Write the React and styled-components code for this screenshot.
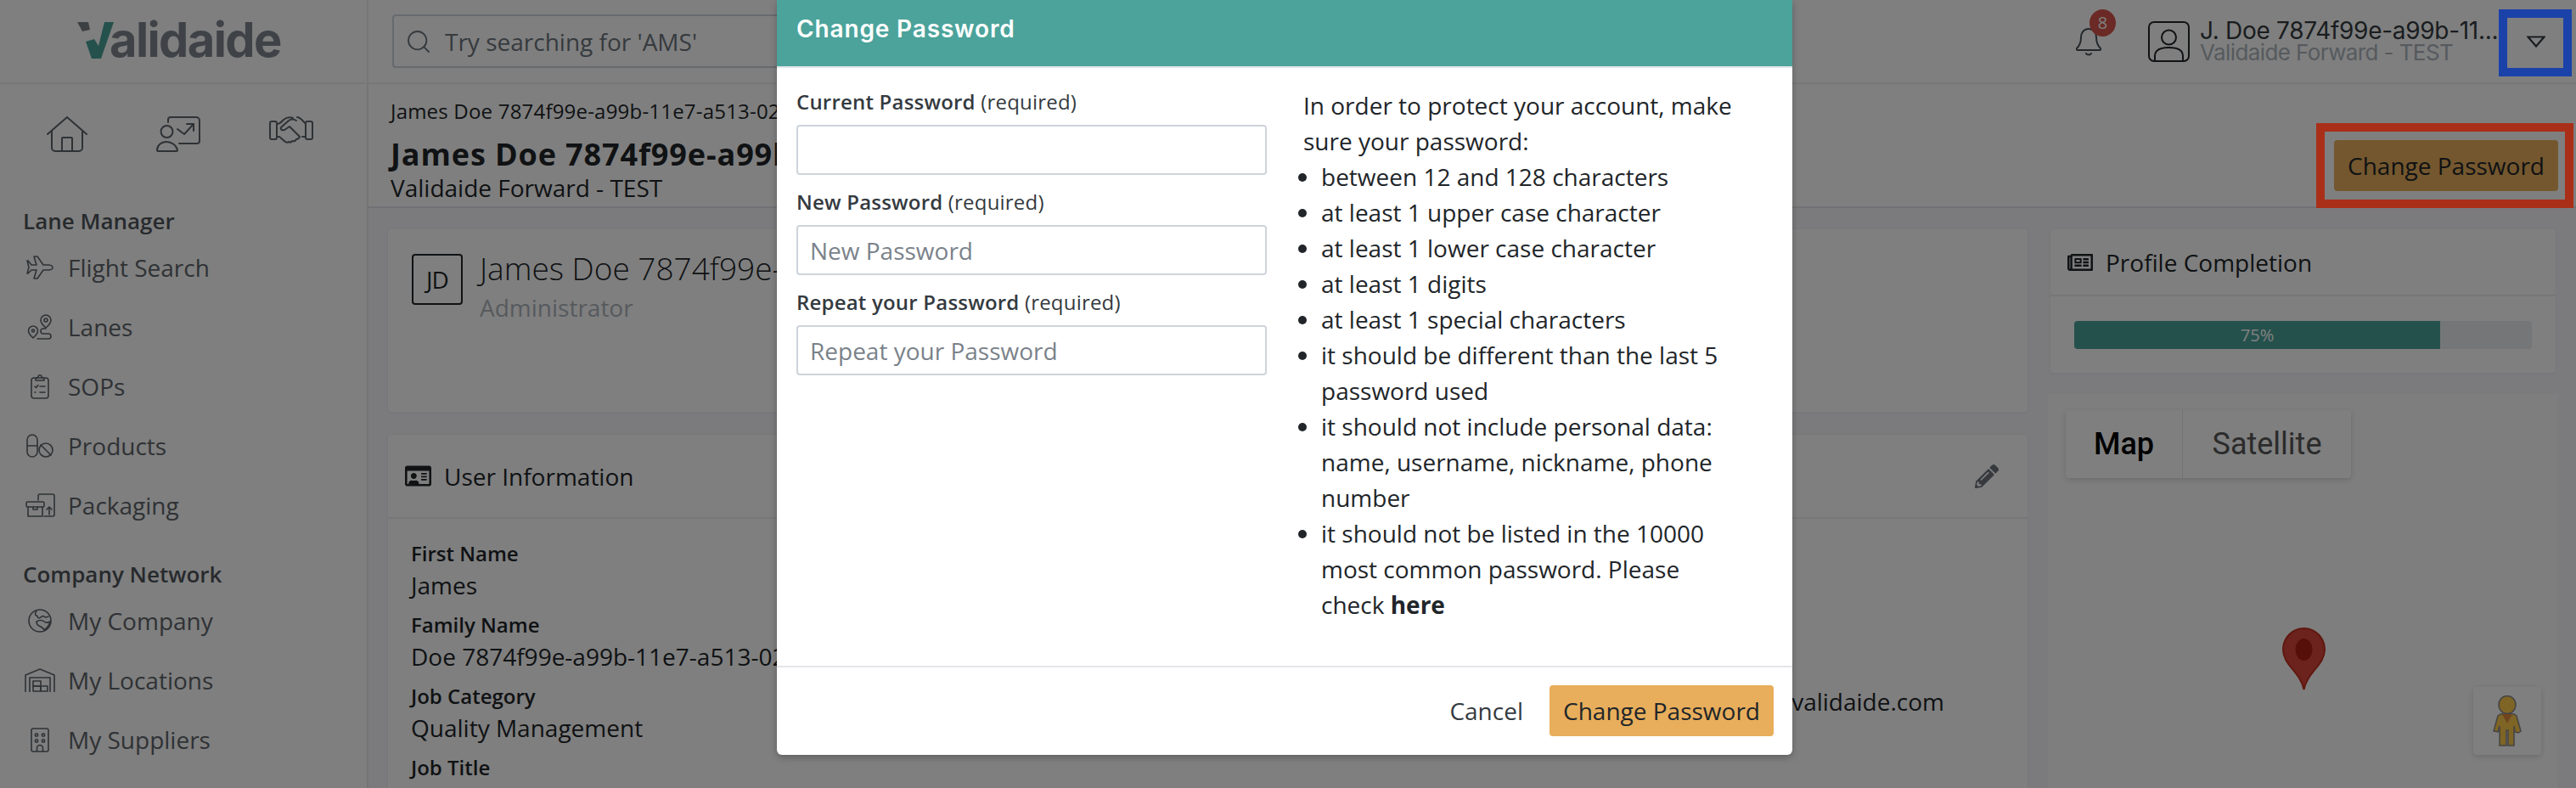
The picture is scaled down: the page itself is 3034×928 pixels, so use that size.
import React from 'react'
import styled, { createGlobalStyle } from 'styled-components'
import { Search } from 'lucide-react'
import { FaRegIdCard, FaRegNewspaper, FaPencilAlt } from 'react-icons/fa'

const lineIcon = { fill: 'none', stroke: 'currentColor', strokeWidth: 1.6, strokeLinecap: 'round', strokeLinejoin: 'round' }

const HomeIcon = () => (
  <svg width="48" height="42" viewBox="0 0 48 42" {...lineIcon} strokeWidth="2">
    <path d="M1 21 24 1l23 20" />
    <path d="M6 17v20a4 4 0 0 0 4 4h28a4 4 0 0 0 4-4V17" />
    <path d="M18 41V26a1 1 0 0 1 1-1h10a1 1 0 0 1 1 1v15" />
  </svg>
)

const CoachIcon = () => (
  <svg width="52" height="42" viewBox="0 0 52 42" {...lineIcon} strokeWidth="2">
    <path d="M14 7V4a3 3 0 0 1 3-3h30a4 4 0 0 1 4 4v24a3 3 0 0 1-3 3H27" />
    <circle cx="12.5" cy="18" r="7" />
    <path d="M1 40c0-6 5-10 11-10s12 4 13 10a1 1 0 0 1-1 1H2a1 1 0 0 1-1-1z" />
    <path d="M25 15l8 6 11-12" />
    <path d="M36 9h8v8" />
  </svg>
)

const HandshakeIcon = () => (
  <svg width="52" height="32" viewBox="0 0 52 32" {...lineIcon} strokeWidth="2">
    <rect x="1" y="6" width="8" height="21" rx="2" />
    <rect x="43" y="6" width="8" height="21" rx="2" />
    <path d="M9 9c4 0 6-3 8-5 4-3 8-3 11-2" />
    <path d="M33 1c3 0 6 3 10 8" />
    <path d="M9 24h3l7 6c2 1 3 1 4 0 2 1 3 1 4-1 3 1 4 0 5-2 2 0 3-1 4-3l-12-12-6 4c-3 1-5-1-4-3l9-8c3-2 6-2 9 0" />
    <path d="M39 24h4" />
  </svg>
)

const PlaneIcon = () => (
  <svg width="32" height="28" viewBox="0 0 32 28" {...lineIcon}>
    <path d="M31 14c0-2-3-3-5-3h-6L13 1H9l3 10H6L2 6H1l2 8-2 7h1l4-4h6L9 27h4l7-10h6c2 0 5-1 5-3z" />
  </svg>
)

const LanesIcon = () => (
  <svg width="30" height="30" viewBox="0 0 30 30" {...lineIcon}>
    <path d="M22 1a6 6 0 0 1 6 6c0 4-6 9-6 9s-6-5-6-9a6 6 0 0 1 6-6z" />
    <circle cx="22" cy="7" r="2" />
    <path d="M7 14a5.500 5.500 0 0 1 5.500 5.500C12.500 23 7 28 7 28s-5.500-5-5.500-8.500A5.500 5.500 0 0 1 7 14z" />
    <circle cx="7" cy="19.500" r="1.500" />
    <path d="M22 17h-3a3 3 0 0 0 0 6h6a3 3 0 0 1 0 6H12" />
  </svg>
)

const ClipboardIcon = () => (
  <svg width="22" height="30" viewBox="0 0 22 30" {...lineIcon}>
    <rect x="1" y="5" width="20" height="24" rx="3" />
    <path d="M6 8V6l3-2c0-3 4-3 4 0l3 2v2z" />
    <path d="M5 15l1.500 1.500L9 13.500" />
    <path d="M11 15h6M5 22h1M11 22h6" />
  </svg>
)

const PillsIcon = () => (
  <svg width="32" height="28" viewBox="0 0 32 28" {...lineIcon}>
    <rect x="1" y="1" width="12" height="26" rx="6" />
    <path d="M1 14h12" />
    <circle cx="23" cy="19" r="8" />
    <path d="M17 13l12 12" />
  </svg>
)

const PackagingIcon = () => (
  <svg width="35" height="28" viewBox="0 0 35 28" {...lineIcon}>
    <path d="M15 8V3a2 2 0 0 1 2-2h15a2 2 0 0 1 2 2v22a2 2 0 0 1-2 2H22" />
    <rect x="1" y="10" width="21" height="6" rx="1.500" />
    <path d="M3 16v11h17V16" />
    <path d="M9 16v3h5v-3" />
    <path d="M28 25V16M25 19l3-3 3 3" />
  </svg>
)

const GlobeIcon = () => (
  <svg width="28" height="28" viewBox="0 0 28 28" {...lineIcon}>
    <circle cx="14" cy="14" r="13" />
    <path d="M10 3c-2 2-2 4 0 5s1 3 3 3 4-4 6-2 3 1 5 0" />
    <path d="M10 15c3-2 7-2 9 0s5 1 7 0c-1 4-4 8-7 10-1-3-4-4-6-5s-3-3-3-5z" />
  </svg>
)

const WarehouseIcon = () => (
  <svg width="36" height="28" viewBox="0 0 36 28" {...lineIcon}>
    <path d="M1 28V8l17-7 17 7v20" />
    <path d="M6 28V11h24v17" />
    <rect x="10" y="15" width="9" height="6" />
    <rect x="10" y="21" width="9" height="6" />
    <rect x="19" y="21" width="8" height="6" />
  </svg>
)

const BuildingIcon = () => (
  <svg width="22" height="29" viewBox="0 0 22 29" {...lineIcon}>
    <rect x="1" y="1" width="20" height="27" rx="2" />
    <rect x="5.500" y="7" width="3" height="3" rx=".8" />
    <rect x="13.500" y="7" width="3" height="3" rx=".8" />
    <rect x="5.500" y="14" width="3" height="3" rx=".8" />
    <rect x="13.500" y="14" width="3" height="3" rx=".8" />
    <path d="M7.500 28v-4a3.500 3.500 0 0 1 7 0v4" />
  </svg>
)

const BellIcon = () => (
  <svg width="30" height="34" viewBox="0 0 30 34" {...lineIcon} strokeWidth="2">
    <path d="M15 2c-6 0-9 5-9 10 0 6-2 10-5 13-1 1 0 2 1 2h26c1 0 2-1 1-2-3-3-5-7-5-13 0-5-3-10-9-10z" />
    <path d="M12 31c1 2 5 2 6 0" />
  </svg>
)

const AvatarIcon = () => (
  <svg width="49" height="48" viewBox="0 0 49 48" {...lineIcon} strokeWidth="2">
    <rect x="1" y="1" width="47" height="46" rx="6" />
    <circle cx="24.500" cy="19" r="8.500" />
    <path d="M8 47v-6c0-7 7-10 16.500-10S41 34 41 41v6" />
  </svg>
)

const CaretIcon = () => (
  <svg width="22" height="14" viewBox="0 0 22 14" {...lineIcon} strokeWidth="2.200" strokeLinejoin="miter">
    <path d="M1.500 1.500h19L11 12.500z" />
  </svg>
)

const LogoMark = () => (
  <svg width="56" height="44" viewBox="0 0 56 44" style={{ marginBottom: -1 }}>
    <path d="M0 0h13l2 9-9 2z" fill="#7b8087" />
    <path d="M10 23l10-3 5 8L32 0h11L28 43H17z" fill="#4ba39b" />
  </svg>
)

const PinIcon = () => (
  <svg width="51" height="74" viewBox="0 0 51 74">
    <path d="M25.500 1C12 1 1 12 1 26c0 18 20 26 24.500 47C30 52 50 44 50 26 50 12 39 1 25.500 1z" fill="#d9453a" stroke="#c0301f" strokeWidth="2" />
    <ellipse cx="25.500" cy="26" rx="10" ry="13" fill="#ae2013" />
  </svg>
)

const PegmanIcon = () => (
  <svg width="34" height="60" viewBox="0 0 34 60">
    <path d="M9 22h16l3 2 5 18-3 2-4-1-1-7v23H18V41h-2v18H8V36l-2 7-5-1 5-18z" fill="#fdc94a" stroke="#888" strokeWidth="1.500" />
    <ellipse cx="17" cy="11" rx="10" ry="10.500" fill="#fdc94a" stroke="#888" strokeWidth="1.500" />
    <path d="M11 22h12l-6 11z" fill="#e08a3c" />
  </svg>
)

const laneItems = [
  ['Flight Search', PlaneIcon],
  ['Lanes', LanesIcon],
  ['SOPs', ClipboardIcon],
  ['Products', PillsIcon],
  ['Packaging', PackagingIcon],
]

const companyItems = [
  ['My Company', GlobeIcon],
  ['My Locations', WarehouseIcon],
  ['My Suppliers', BuildingIcon],
]

const userFields = [
  ['First Name', 'James'],
  ['Family Name', 'Doe 7874f99e-a99b-11e7-a513-0242ac110002'],
  ['Job Category', 'Quality Management'],
  ['Job Title', ''],
]

const App = () => {
  return (
    <Page>
      <GlobalStyle />
      <TopBar>
        <LogoCell>
          <LogoMark />
          <LogoText>alidaide</LogoText>
        </LogoCell>
        <SearchBox>
          <Search size={32} strokeWidth={1.4} />
          <span>Try searching for 'AMS'</span>
        </SearchBox>
        <UserArea>
          <BellWrap>
            <BellIcon />
            <Badge>8</Badge>
          </BellWrap>
          <AvatarIcon />
          <UserNames>
            <UserName>J. Doe 7874f99e-a99b-11...</UserName>
            <UserCompany>Validaide Forward - TEST</UserCompany>
          </UserNames>
          <CaretSlot><CaretIcon /></CaretSlot>
        </UserArea>
      </TopBar>

      <Main>
        <Sidebar>
          <QuickLinks>
            <HomeIcon />
            <CoachIcon />
            <HandshakeIcon />
          </QuickLinks>
          <NavTitle>Lane Manager</NavTitle>
          {laneItems.map(([label, Icon]) => (
            <NavItem key={label}><IconSlot><Icon /></IconSlot>{label}</NavItem>
          ))}
          <NavTitle $second>Company Network</NavTitle>
          {companyItems.map(([label, Icon]) => (
            <NavItem key={label}><IconSlot><Icon /></IconSlot>{label}</NavItem>
          ))}
        </Sidebar>

        <Content>
          <PageHeader>
            <div>
              <Crumb>James Doe 7874f99e-a99b-11e7-a513-0242ac110002</Crumb>
              <PageTitle>James Doe 7874f99e-a99b-11e7-a513-0242ac110002</PageTitle>
              <PageSub>Validaide Forward - TEST</PageSub>
            </div>
            <ActionButton>Change Password</ActionButton>
          </PageHeader>

          <Columns>
            <Column>
              <ProfileCard>
                <Initials>JD</Initials>
                <div>
                  <ProfileName>James Doe 7874f99e-a99b-11e7-a513-0242ac110002</ProfileName>
                  <ProfileRole>Administrator</ProfileRole>
                </div>
              </ProfileCard>
              <Card>
                <CardHeader $height={99}>
                  <FaRegIdCard size={31} />
                  <span>User Information</span>
                  <EditIcon><FaPencilAlt size={28} /></EditIcon>
                </CardHeader>
                <InfoBody>
                  <div>
                    {userFields.map(([label, value]) => (
                      <Field key={label}>
                        <FieldLabel>{label}</FieldLabel>
                        {value && <FieldValue>{value}</FieldValue>}
                      </Field>
                    ))}
                  </div>
                  <EmailColumn>
                    <FieldLabel>Email</FieldLabel>
                    <FieldValue>james.doe@validaide.com</FieldValue>
                  </EmailColumn>
                </InfoBody>
              </Card>
            </Column>
            <SideColumn>
              <Card>
                <CardHeader $height={79}>
                  <FaRegNewspaper size={30} />
                  <span>Profile Completion</span>
                </CardHeader>
                <ProgressBody>
                  <ProgressTrack>
                    <ProgressFill style={{ width: '80%' }}>75%</ProgressFill>
                  </ProgressTrack>
                </ProgressBody>
              </Card>
              <MapBox>
                <MapSwitch>
                  <MapTab $active>Map</MapTab>
                  <MapTab>Satellite</MapTab>
                </MapSwitch>
                <MapPin><PinIcon /></MapPin>
                <Pegman><PegmanIcon /></Pegman>
              </MapBox>
            </SideColumn>
          </Columns>
        </Content>
      </Main>

      <Backdrop />
      <BlueMark />
      <RedMark />

      <Modal>
        <ModalHeader>Change Password</ModalHeader>
        <ModalBody>
          <FormColumn>
            <FormField>
              <FormLabel>Current Password <span>(required)</span></FormLabel>
              <FormInput type="password" />
            </FormField>
            <FormField>
              <FormLabel>New Password <span>(required)</span></FormLabel>
              <FormInput type="password" placeholder="New Password" />
            </FormField>
            <FormField>
              <FormLabel>Repeat your Password <span>(required)</span></FormLabel>
              <FormInput type="password" placeholder="Repeat your Password" />
            </FormField>
          </FormColumn>
          <RulesColumn>
            In order to protect your account, make sure your password:
            <RulesList>
              <li>between 12 and 128 characters</li>
              <li>at least 1 upper case character</li>
              <li>at least 1 lower case character</li>
              <li>at least 1 digits</li>
              <li>at least 1 special characters</li>
              <li>it should be different than the last 5 password used</li>
              <li>it should not include personal data: name, username, nickname, phone number</li>
              <li>it should not be listed in the 10000 most common password. Please check <b>here</b></li>
            </RulesList>
          </RulesColumn>
        </ModalBody>
        <ModalFooter>
          <CancelButton>Cancel</CancelButton>
          <ActionButton>Change Password</ActionButton>
        </ModalFooter>
      </Modal>
    </Page>
  )
}

export default App

const GlobalStyle = createGlobalStyle`
  html, body {
    margin: 0;
    overflow: hidden;
    background: #fff;
  }
  * {
    box-sizing: border-box;
  }
`;

const Page = styled.div`
  position: relative;
  width: 3034px;
  height: 928px;
  overflow: hidden;
  display: flex;
  flex-direction: column;
  font-family: "Open Sans", sans-serif;
  font-size: 28px;
  color: #212529;
  background: #fff;
`;

const TopBar = styled.header`
  flex: none;
  height: 99px;
  display: flex;
  align-items: center;
  border-bottom: 2px solid #eceef1;
`;

const LogoCell = styled.div`
  flex: none;
  width: 434px;
  height: 100%;
  padding: 0 0 3px 91px;
  display: flex;
  align-items: center;
  border-right: 2px solid #eceef1;
`;

const LogoText = styled.span`
  margin-left: -18px;
  font-family: Inter, sans-serif;
  font-size: 56px;
  font-weight: 700;
  line-height: 1;
  letter-spacing: -1.600px;
  color: #7f8690;
`;

const SearchBox = styled.div`
  flex: none;
  width: 1500px;
  height: 63px;
  margin-left: 28px;
  padding-left: 13px;
  display: flex;
  align-items: center;
  gap: 15px;
  border: 2px solid #ced4da;
  border-radius: 4px;
  color: #6c757d;
`;

const UserArea = styled.div`
  margin-left: auto;
  height: 100%;
  display: flex;
  align-items: center;
`;

const BellWrap = styled.div`
  position: relative;
  width: 30px;
  height: 34px;
  margin-right: 55px;
  color: #495057;
`;

const Badge = styled.span`
  position: absolute;
  top: -21px;
  left: 16px;
  width: 31px;
  height: 32px;
  border-radius: 50%;
  background: #d6544a;
  color: #fff;
  font-size: 20px;
  line-height: 32px;
  text-align: center;
`;

const UserNames = styled.div`
  width: 349px;
  margin-left: 12px;
  font-family: Inter, sans-serif;
  white-space: nowrap;
`;

const UserName = styled.div`
  font-size: 28px;
  line-height: 26px;
  letter-spacing: -0.300px;
  color: #343a40;
`;

const UserCompany = styled.div`
  font-size: 26px;
  line-height: 26px;
  letter-spacing: -0.600px;
  color: #adb5bd;
`;

const CaretSlot = styled.div`
  width: 94px;
  display: flex;
  justify-content: center;
  color: #343a40;
`;

const Main = styled.div`
  flex: 1;
  min-height: 0;
  display: flex;
`;

const Sidebar = styled.nav`
  flex: none;
  width: 434px;
  padding-left: 28px;
  border-right: 2px solid #e6e8eb;
  color: #5e646b;
`;

const QuickLinks = styled.div`
  height: 80px;
  padding: 38px 0 0 27px;
  display: flex;
  gap: 81px;
`;

const NavTitle = styled.div`
  margin: ${(p) => (p.$second ? '28px' : '63px')} 0 2px -1px;
  font-size: 26px;
  font-weight: 600;
  line-height: 36px;
  color: #4f555b;
`;

const NavItem = styled.div`
  height: 70px;
  display: flex;
  align-items: center;
`;

const IconSlot = styled.span`
  width: 38px;
  margin-right: 14px;
  display: flex;
  justify-content: center;
`;

const Content = styled.main`
  flex: 1;
  min-width: 0;
  display: flex;
  flex-direction: column;
  background: #f6f7fa;
`;

const PageHeader = styled.div`
  flex: none;
  height: 146px;
  padding: 14px 21px 0 26px;
  display: flex;
  justify-content: space-between;
  align-items: flex-start;
  background: #fff;
  border-bottom: 2px solid #e2e4e8;
  white-space: nowrap;
`;

const Crumb = styled.div`
  font-size: 24px;
  line-height: 36px;
  letter-spacing: 0.200px;
`;

const PageTitle = styled.div`
  margin-top: 9px;
  font-size: 36px;
  font-weight: 700;
  line-height: 48px;
  letter-spacing: 0.900px;
`;

const PageSub = styled.div`
  margin-top: -4px;
  line-height: 38px;
`;

const ActionButton = styled.button`
  flex: none;
  width: 264px;
  height: 60px;
  margin-top: 52px;
  padding: 0;
  border: 0;
  border-radius: 4px;
  background: #e8ae5c;
  color: #212529;
  font: inherit;
`;

const Columns = styled.div`
  flex: 1;
  min-height: 0;
  padding: 24px 0 0 22px;
  display: grid;
  grid-template-columns: 1933px 597px;
  gap: 25px;
`;

const Column = styled.div`
  display: flex;
  flex-direction: column;
  gap: 25px;
  min-width: 0;
`;

const SideColumn = styled(Column)`
  gap: 24px;
`;

const Card = styled.section`
  background: #fff;
  border: 1px solid #eef0f3;
  border-radius: 4px;
  box-shadow: 0 1px 2px rgba(0, 0, 0, 0.04);
`;

const ProfileCard = styled(Card)`
  flex: none;
  height: 217px;
  padding: 29px 28px;
  display: flex;
  gap: 20px;
`;

const Initials = styled.div`
  flex: none;
  width: 60px;
  height: 60px;
  display: flex;
  align-items: center;
  justify-content: center;
  border: 2px solid #212529;
  border-radius: 4px;
  letter-spacing: -1px;
`;

const ProfileName = styled.div`
  margin-top: -6px;
  font-size: 37px;
  font-weight: 300;
  line-height: 46px;
  white-space: nowrap;
`;

const ProfileRole = styled.div`
  margin-top: 3px;
  line-height: 40px;
  color: #adb5bd;
`;

const CardHeader = styled.div`
  height: ${(p) => p.$height}px;
  padding: 0 34px 0 20px;
  display: flex;
  align-items: center;
  gap: 15px;
  border-bottom: 2px solid #eceef1;
`;

const EditIcon = styled.span`
  margin-left: auto;
  display: flex;
  color: #6c757d;
`;

const InfoBody = styled.div`
  padding: 23px 98px 0 27px;
  display: flex;
  justify-content: space-between;
`;

const Field = styled.div`
  margin-bottom: 9px;
`;

const FieldLabel = styled.div`
  font-size: 24px;
  font-weight: 600;
  line-height: 36px;
`;

const FieldValue = styled.div`
  margin-top: -1px;
  line-height: 40px;
  white-space: nowrap;
`;

const EmailColumn = styled.div`
  padding-top: 137px;
`;

const ProgressBody = styled.div`
  height: 90px;
  padding: 29px 28px 0;
`;

const ProgressTrack = styled.div`
  height: 33px;
  overflow: hidden;
  border-radius: 4px;
  background: #e9ecef;
`;

const ProgressFill = styled.div`
  height: 100%;
  background: #4ba39b;
  color: #fff;
  font-size: 20px;
  line-height: 33px;
  text-align: center;
`;

const MapBox = styled.div`
  position: relative;
  flex: 1;
  margin: 0 -2px;
  background: #fcfcfc;
`;

const MapSwitch = styled.div`
  position: absolute;
  top: 19px;
  left: 21px;
  display: flex;
  border-radius: 4px;
  background: #fff;
  box-shadow: 0 2px 6px rgba(0, 0, 0, 0.15);
  font-family: Roboto, sans-serif;
  font-size: 36px;
`;

const MapTab = styled.div`
  height: 80px;
  width: ${(p) => (p.$active ? '138px' : '198px')};
  display: flex;
  align-items: center;
  justify-content: center;
  font-weight: ${(p) => (p.$active ? 500 : 400)};
  color: ${(p) => (p.$active ? '#000' : '#565656')};
  border-right: ${(p) => (p.$active ? '1px solid #e6e6e6' : '0')};
`;

const MapPin = styled.div`
  position: absolute;
  top: 275px;
  left: 276px;
  display: flex;
`;

const Pegman = styled.div`
  position: absolute;
  top: 345px;
  left: 501px;
  width: 80px;
  height: 80px;
  display: flex;
  align-items: center;
  justify-content: center;
  border-radius: 4px;
  background: #fff;
  box-shadow: 0 2px 6px rgba(0, 0, 0, 0.15);
`;

const Backdrop = styled.div`
  position: absolute;
  inset: 0;
  background: rgba(0, 0, 0, 0.5);
`;

const BlueMark = styled.div`
  position: absolute;
  top: 11px;
  left: 2943px;
  width: 86px;
  height: 79px;
  border: 10px solid #1b42a9;
`;

const RedMark = styled.div`
  position: absolute;
  top: 145px;
  left: 2728px;
  width: 303px;
  height: 100px;
  border: 10px solid #a92f18;
`;

const Modal = styled.div`
  position: absolute;
  top: 0;
  left: 915px;
  width: 1196px;
  height: 889px;
  display: flex;
  flex-direction: column;
  background: #fff;
  border-radius: 0 0 6px 6px;
  box-shadow: 0 3px 8px rgba(0, 0, 0, 0.25);
`;

const ModalHeader = styled.div`
  flex: none;
  height: 80px;
  padding: 14px 23px 0;
  border-bottom: 2px solid #e3e5e8;
  background: #4ba39b;
  color: #fff;
  font-family: Inter, sans-serif;
  font-size: 28px;
  font-weight: 600;
  line-height: 40px;
  letter-spacing: 0.850px;
`;

const ModalBody = styled.div`
  flex: 1;
  min-height: 0;
  padding: 22px 0 0 23px;
  display: flex;
`;

const FormColumn = styled.div`
  flex: none;
  width: 554px;
`;

const FormField = styled.div`
  margin-bottom: 14px;
`;

const FormLabel = styled.label`
  display: block;
  margin-bottom: 9px;
  font-size: 24px;
  font-weight: 600;
  line-height: 36px;
  letter-spacing: 0.200px;
  color: #343a40;

  span {
    font-weight: 400;
  }
`;

const FormInput = styled.input`
  display: block;
  width: 100%;
  height: 59px;
  padding: 0 14px;
  border: 2px solid #ced4da;
  border-radius: 4px;
  font: inherit;
  font-size: 28px;
  outline: none;

  &::placeholder {
    color: #7a828a;
    opacity: 1;
  }
`;

const RulesColumn = styled.div`
  flex: none;
  width: 515px;
  margin-left: 43px;
  padding-top: 1px;
  line-height: 42px;
`;

const RulesList = styled.ul`
  margin: 0;
  padding-left: 21px;
`;

const ModalFooter = styled.div`
  flex: none;
  height: 105px;
  padding: 21px 22px 0 0;
  display: flex;
  justify-content: flex-end;
  align-items: flex-start;
  gap: 31px;
  border-top: 2px solid #e3e5e8;

  ${ActionButton} {
    margin-top: 0;
  }
`;

const CancelButton = styled.button`
  height: 60px;
  padding: 0;
  border: 0;
  background: none;
  color: #343a40;
  font: inherit;
`;
